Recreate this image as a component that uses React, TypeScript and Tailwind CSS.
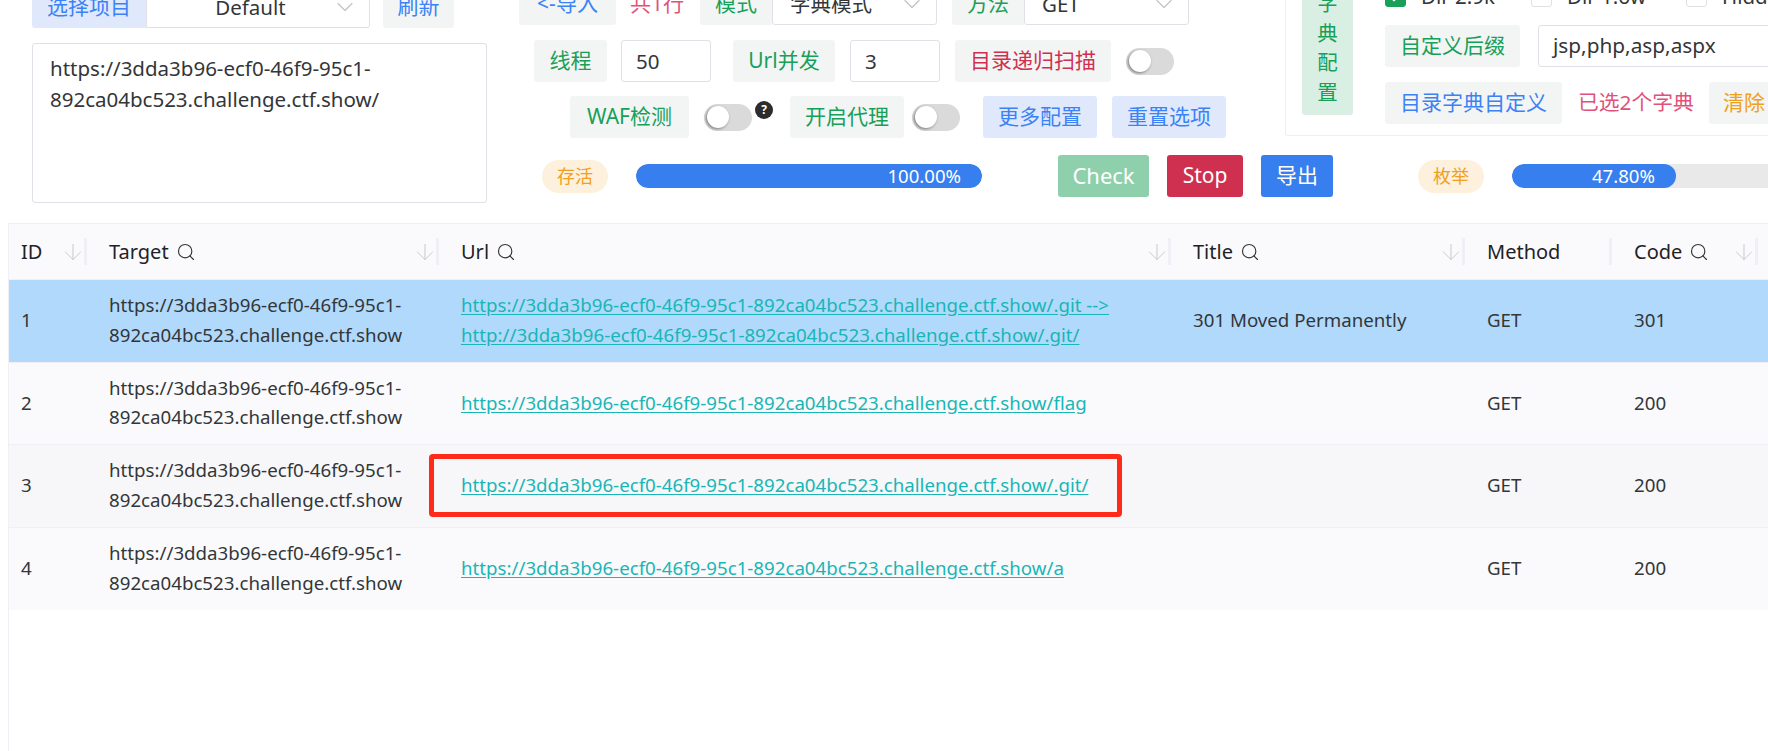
import React from "react";
import { ChevronDown, ArrowDown, Search, Check } from "lucide-react";

const font = "font-['Noto_Sans','Noto_Sans_CJK_SC',sans-serif]";
const base = "https://3dda3b96-ecf0-46f9-95c1-892ca04bc523.challenge.ctf.show";

function Tag({ className, children }: { className: string; children: React.ReactNode }) {
  return <div className={`flex h-[42px] shrink-0 items-center justify-center rounded-[3px] pb-[2px] text-[21px] leading-none ${className}`}>{children}</div>;
}
function Sel({ w, text, center }: { w: string; text: string; center?: boolean }) {
  return (
    <div className={`relative flex h-[42px] shrink-0 items-center rounded-[3px] border border-[#e0e0e6] bg-white pl-[17px] text-[20.5px] text-[#333639] ${w} ${center ? "justify-center pr-8" : ""}`}>
      {text}
      <ChevronDown className="absolute right-[10px] top-[6px] text-[#c2c2c2]" size={28} strokeWidth={1} />
    </div>
  );
}
function Toggle({ className }: { className: string }) {
  return (
    <div className={`flex h-[27px] w-[48px] shrink-0 items-center rounded-full bg-[#dadada] pl-[3px] ${className}`}>
      <div className="h-[22px] w-[22px] rounded-full bg-white shadow-[-1px_1px_3px_rgba(0,0,0,0.45)]" />
    </div>
  );
}
function Box({ on }: { on?: boolean }) {
  return (
    <div className={`flex h-[21px] w-[21px] shrink-0 items-center justify-center rounded-[3px] border ${on ? "border-[#18a058] bg-[#18a058]" : "border-[#e0e0e6] bg-white"}`}>
      {on && <Check size={16} strokeWidth={3} className="text-white" />}
    </div>
  );
}
function Bar({ pct, w }: { pct: string; w: string }) {
  return (
    <div className={`h-[24px] shrink-0 overflow-hidden rounded-full bg-[#e9e9e9] ${w}`}>
      <div className="flex h-full items-center justify-end rounded-full bg-[#377eee] pr-[21px] text-[18.6px] leading-none text-white" style={{ width: pct }}>{pct}</div>
    </div>
  );
}
function Pill({ text, w }: { text: string; w: string }) {
  return <div className={`flex h-[33px] shrink-0 items-center justify-center rounded-full bg-[#fdf1de] text-[18px] leading-none text-[#f0a020] ${w}`}>{text}</div>;
}
function Th({ w, label, search, sort = true, pl = "pl-[22px]" }: { w: string; label: string; search?: boolean; sort?: boolean; pl?: string }) {
  return (
    <div className={`relative flex h-full shrink-0 items-center text-[20px] text-[#1f2225] ${pl} ${w}`}>
      {label}
      {search && <Search className="ml-[7px] text-[#333639]" size={20} strokeWidth={1.4} />}
      {sort && <ArrowDown className="absolute right-[1px] top-[15px] text-[#c8c8cc]" size={26} strokeWidth={0.9} />}
      <div className="absolute right-0 top-[14px] h-[27px] w-[3px] bg-[#efeff5]" />
    </div>
  );
}
function Link({ children }: { children: React.ReactNode }) {
  return <span className="block text-[#18b6b6] underline underline-offset-2">{children}</span>;
}
function Row({ id, links, title, code, cls, last }: { id: number; links: string[]; title?: string; code: number; cls: string; last?: boolean }) {
  const cell = "flex shrink-0 items-center pl-[22px] pr-2";
  return (
    <div className={`flex h-[82.5px] pb-[2px] text-[18.7px] leading-[29.3px] text-[#333639] ${last ? "" : "border-b border-[#efeff5]"} ${cls}`}>
      <div className="flex w-[78px] shrink-0 items-center pl-[12px]">{id}</div>
      <div className={`${cell} w-[352px]`}><span className="block whitespace-nowrap">https://3dda3b96-ecf0-46f9-95c1-<br />892ca04bc523.challenge.ctf.show</span></div>
      <div className={`${cell} w-[732px]`}><div>{links.map((l) => <Link key={l}>{l}</Link>)}</div></div>
      <div className={`${cell} w-[294px]`}>{title}</div>
      <div className={`${cell} w-[147px]`}>GET</div>
      <div className={`${cell} w-[146px]`}>{code}</div>
      <div className="flex-1" />
    </div>
  );
}

export default function App() {
  return (
    <div className={`flex h-[751px] w-[1768px] flex-col overflow-hidden bg-white ${font}`}>
      <div className="flex h-[222px] shrink-0 items-start">
        {/* left */}
        <div className="ml-[32px] mt-[-14px] w-[455px] shrink-0">
          <div className="flex h-[42px]">
            <div className="flex w-[114px] items-center justify-center rounded-l-[3px] bg-[#dfe9fb] pb-[2px] text-[21px] leading-none text-[#3b82f6]">选择项目</div>
            <Sel w="w-[224px] rounded-l-none" text="Default" center />
            <Tag className="ml-[13px] w-[71px] bg-[#f3f5f5] text-[#3b82f6]">刷新</Tag>
          </div>
          <div className="mt-[15px] h-[160px] rounded-[3px] border border-[#e0e0e6] px-[17px] py-[9px] text-[20.5px] leading-[31px] text-[#333639]">
            https://3dda3b96-ecf0-46f9-95c1-<br />892ca04bc523.challenge.ctf.show/
          </div>
        </div>
        {/* right */}
        <div className="mt-[-17px] flex min-w-0 flex-1 flex-col">
          <div className="flex">
            <div className="w-[798px] shrink-0">
              <div className="flex h-[42px] items-center pl-[32px]">
                <Tag className="w-[97px] bg-[#f3f5f5] text-[#3b82f6]">&lt;-导入</Tag>
                <span className="ml-[14px] w-[70px] pb-[2px] text-[21px] leading-none text-[#e0527a]">共1行</span>
                <Tag className="w-[72px] rounded-r-none bg-[#f3f5f5] text-[#18a058]">模式</Tag>
                <Sel w="w-[165px]" text="字典模式" />
                <Tag className="ml-[15px] w-[72px] rounded-r-none bg-[#f3f5f5] text-[#18a058]">方法</Tag>
                <Sel w="w-[165px]" text="GET" />
              </div>
              <div className="mt-[15px] flex h-[42px] items-center pl-[47px]">
                <Tag className="w-[73px] bg-[#f3f5f5] text-[#18a058]">线程</Tag>
                <div className="ml-[14px] flex h-[42px] w-[90px] items-center rounded-[3px] border border-[#e0e0e6] pl-[14px] text-[20.5px] text-[#333639]">50</div>
                <Tag className="ml-[22px] w-[102px] bg-[#f3f5f5] text-[#18a058]">Url并发</Tag>
                <div className="ml-[15px] flex h-[42px] w-[90px] items-center rounded-[3px] border border-[#e0e0e6] pl-[14px] text-[20.5px] text-[#333639]">3</div>
                <Tag className="ml-[15px] w-[156px] bg-[#f3f5f5] text-[#d03050]">目录递归扫描</Tag>
                <Toggle className="ml-[15px]" />
              </div>
              <div className="mt-[14px] flex h-[42px] items-center pl-[83px]">
                <Tag className="w-[119px] bg-[#f3f5f5] text-[#18a058]">WAF检测</Tag>
                <Toggle className="ml-[15px]" />
                <div className="relative top-[-7px] ml-[3px] flex h-[18px] w-[18px] shrink-0 items-center justify-center rounded-full bg-[#2c2c2e] text-[12px] font-bold leading-none text-white">?</div>
                <Tag className="ml-[17px] w-[114px] bg-[#f3f5f5] text-[#18a058]">开启代理</Tag>
                <Toggle className="ml-[8px]" />
                <Tag className="ml-[23px] w-[114px] bg-[#dfe9fb] text-[#3b82f6]">更多配置</Tag>
                <Tag className="ml-[15px] w-[114px] bg-[#dfe9fb] text-[#3b82f6]">重置选项</Tag>
              </div>
            </div>
            {/* dict panel */}
            <div className="flex h-[153px] w-[520px] shrink-0 items-start rounded-[3px] border border-t-0 border-[#efeff5] pl-[16px]">
              <div className="flex h-[132px] w-[51px] shrink-0 flex-col items-center justify-end rounded-[3px] bg-[#daefe3] pb-[8px] text-[20.5px] leading-[29.5px] text-[#18a058]">
                <span>字</span><span>典</span><span>配</span><span>置</span>
              </div>
              <div className="ml-[32px] flex h-[141px] flex-col justify-end gap-[15px]">
                <div className="flex h-[30px] items-center text-[20.5px] leading-none text-[#333639]">
                  <Box on /><span className="ml-[15px] w-[110px]">Dir 2.9k</span>
                  <Box /><span className="ml-[15px] w-[119px]">Dir 1.6w</span>
                  <Box /><span className="ml-[15px]">Hidden</span>
                </div>
                <div className="flex h-[42px] items-center">
                  <Tag className="w-[135px] bg-[#f3f5f5] text-[#18a058]">自定义后缀</Tag>
                  <div className="ml-[18px] flex h-[42px] w-[300px] items-center rounded-[3px] border border-[#e0e0e6] pl-[14px] text-[20.8px] text-[#333639]">jsp,php,asp,aspx</div>
                </div>
                <div className="flex h-[42px] items-center">
                  <Tag className="w-[177px] bg-[#f3f5f5] text-[#3b82f6]">目录字典自定义</Tag>
                  <span className="ml-[16px] w-[131px] whitespace-nowrap pb-[2px] text-[20.8px] leading-none text-[#e0527a]">已选2个字典</span>
                  <Tag className="w-[70px] bg-[#f3f5f5] text-[#f0a020]">清除</Tag>
                </div>
              </div>
            </div>
          </div>
          {/* progress */}
          <div className="mt-[17px] flex h-[42px] items-center pl-[55px]">
            <Pill text="存活" w="w-[66px]" />
            <div className="ml-[28px]"><Bar pct="100.00%" w="w-[346px]" /></div>
            <div className="ml-[76px] flex h-[42px] w-[91px] shrink-0 items-center justify-center rounded-[3px] bg-[#8ed0ab] pb-[2px] text-[22px] leading-none text-white">Check</div>
            <div className="ml-[18px] flex h-[42px] w-[76px] shrink-0 items-center justify-center rounded-[3px] bg-[#d03050] pb-[2px] text-[21px] leading-none text-white">Stop</div>
            <div className="ml-[18px] flex h-[42px] w-[72px] shrink-0 items-center justify-center rounded-[3px] bg-[#377eee] pb-[2px] text-[21px] leading-none text-white">导出</div>
            <div className="ml-[85px]"><Pill text="枚举" w="w-[66px]" /></div>
            <div className="ml-[28px]"><Bar pct="47.80%" w="w-[343px]" /></div>
          </div>
        </div>
      </div>
      {/* table */}
      <div className="ml-[8px] mt-[1px] flex-1 border-l border-t border-[#efeff5]">
        <div className="flex h-[56px] border-b border-[#efeff5] bg-[#fafafc]">
          <Th w="w-[78px]" label="ID" pl="pl-[12px]" />
          <Th w="w-[352px]" label="Target" search />
          <Th w="w-[732px]" label="Url" search />
          <Th w="w-[294px]" label="Title" search />
          <Th w="w-[147px]" label="Method" sort={false} />
          <Th w="w-[146px]" label="Code" search />
        </div>
        <Row id={1} cls="bg-[#b1d9fb]" title="301 Moved Permanently" code={301} links={[`${base}/.git -->`, `${base.replace("https", "http")}/.git/`]} />
        <Row id={2} cls="bg-[#fafafc]" code={200} links={[`${base}/flag`]} />
        <div className="relative">
          <Row id={3} cls="bg-[#f7f7f9]" code={200} links={[`${base}/.git/`]} />
          <div className="absolute left-[420px] top-[9px] h-[63px] w-[693px] rounded-[4px] border-[5px] border-[#ff2a1a]" />
        </div>
        <Row id={4} cls="bg-[#fafafc]" code={200} links={[`${base}/a`]} last />
      </div>
    </div>
  );
}
